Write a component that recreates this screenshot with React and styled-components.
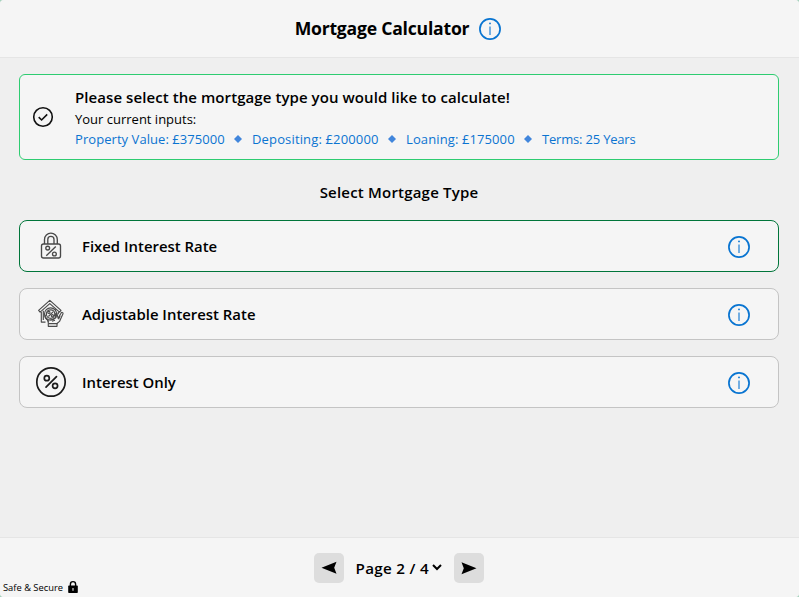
import React from "react";
import styled, { createGlobalStyle } from "styled-components";

const GlobalStyle = createGlobalStyle`
  *, *::before, *::after { box-sizing: border-box; }
  body {
    margin: 0;
    background: #a5d3bd;
    color: #000;
    font-family: "Open Sans", "Noto Sans", sans-serif;
  }
`;

const Shell = styled.div`
  display: grid;
  grid-template-rows: 58px 1fr 60px;
  height: 597px;
  overflow: hidden;
  border-radius: 4px;
  background: #efefef;
`;

const Header = styled.header`
  display: flex;
  align-items: center;
  justify-content: center;
  gap: 9px;
  padding: 1px 2px 0 0;
  background: #f5f5f5;
  border-bottom: 1px solid #e5e5e5;
`;

const Title = styled.h1`
  margin: 0 0 2px;
  font-size: 17.6px;
  line-height: 24px;
  font-weight: 700;
  letter-spacing: -0.22px;
  white-space: nowrap;
`;

const Main = styled.main`
  display: flex;
  flex-direction: column;
  padding: 16px 20px 0 19px;
`;

const Notice = styled.section`
  display: flex;
  align-items: center;
  gap: 21px;
  height: 86px;
  padding: 0 12px;
  background: #f5f5f5;
  border: 1px solid #2ecc71;
  border-radius: 6px;
`;

const NoticeBody = styled.div`
  display: flex;
  flex-direction: column;
`;

const NoticeTitle = styled.h2`
  margin: 0;
  font-size: 15px;
  line-height: 22px;
  font-weight: 600;
  letter-spacing: 0.075px;
  white-space: nowrap;
`;

const NoticeText = styled.p`
  margin: 0;
  padding-top: 1px;
  font-size: 13px;
  line-height: 20px;
  white-space: nowrap;
`;

const Summary = styled.ul`
  display: flex;
  align-items: center;
  margin: 0;
  padding: 0;
  list-style: none;
  font-size: 13px;
  line-height: 20px;
  color: #0b74d1;
  white-space: nowrap;
`;

const SummaryItem = styled.li`
  width: ${(p) => p.$width}px;
  letter-spacing: ${(p) => p.$tracking}px;
`;

const Divider = styled.li`
  display: flex;
  justify-content: center;
  width: 27px;
  padding-right: 1px;
`;

const SectionTitle = styled.h2`
  margin: 21px 0 17px;
  font-size: 15px;
  line-height: 22px;
  font-weight: 600;
  letter-spacing: 0.2px;
  text-align: center;
`;

const Options = styled.div`
  display: grid;
  gap: 16px;
`;

const Option = styled.div`
  display: grid;
  grid-template-columns: 32px 1fr 24px;
  align-items: center;
  column-gap: 15px;
  height: 52px;
  padding: 0 27px 0 15px;
  background: #f5f5f5;
  border: 1px solid ${(p) => (p.$selected ? "#00753a" : "#c4c4c4")};
  border-radius: 8px;
`;

const OptionLabel = styled.span`
  font-size: 14.9px;
  line-height: 22px;
  font-weight: 600;
`;

const OptionInfo = styled.span`
  padding-top: 2px;
`;

const Icon = styled.svg`
  display: block;
  flex: none;
  fill: none;
  overflow: visible;
`;

const Footer = styled.footer`
  display: grid;
  grid-template-columns: 1fr auto 1fr;
  padding-right: 2px;
  background: #f5f5f5;
  border-top: 1px solid #e5e5e5;
`;

const Secure = styled.div`
  display: flex;
  align-items: center;
  align-self: end;
  gap: 5px;
  padding: 0 0 3px 3px;
  font-size: 9.35px;
  line-height: 13px;
  white-space: nowrap;
`;

const Pager = styled.nav`
  display: flex;
  align-items: center;
  align-self: center;
  gap: 12px;
`;

const PageButton = styled.button`
  display: grid;
  place-items: center;
  width: 30px;
  height: 30px;
  padding: 0;
  border: 0;
  border-radius: 5px;
  background: #dddddd;
`;

const PageSelect = styled.div`
  display: flex;
  align-items: center;
  gap: 3px;
  width: 86px;
  font-size: 15.2px;
  line-height: 22px;
  font-weight: 600;
  letter-spacing: 0.3px;
  white-space: nowrap;
`;

const InfoIcon = () => (
  <Icon width="24" height="24" viewBox="0 0 24 24" stroke="#0874d1">
    <circle cx="12" cy="12" r="10.1" strokeWidth="1.7" />
    <path d="M12 9.5V18" strokeWidth="1.1" />
    <circle cx="12" cy="6.4" r="0.9" fill="#0874d1" stroke="none" />
  </Icon>
);

const CheckIcon = () => (
  <Icon width="22" height="22" viewBox="0 0 22 22" stroke="#111" strokeWidth="1.6">
    <circle cx="11" cy="11" r="9.3" />
    <path d="M6.7 11.2 9.6 14 15.2 8.4" />
  </Icon>
);

const Diamond = () => (
  <Icon width="8" height="8" viewBox="0 0 8 8">
    <path d="M4 0 8 4 4 8 0 4Z" fill="#4186dc" />
  </Icon>
);

const LockPercentIcon = () => (
  <Icon width="32" height="32" viewBox="0 0 32 32" stroke="#494949" strokeWidth="1.35">
    <rect x="6.5" y="14" width="19" height="14" rx="2" />
    <path d="M9.5 14V9.5a6.4 6.4 0 0 1 12.8 0V14M12.8 14V9.5a3.1 3.1 0 0 1 6.2 0V14" />
    <path d="M20.8 16.4 11.3 25.7" />
    <circle cx="12.7" cy="18.1" r="1.9" />
    <circle cx="19.4" cy="24" r="1.9" />
  </Icon>
);

const HouseHandIcon = () => (
  <Icon width="32" height="32" viewBox="0 0 32 32" stroke="#4b4b4b" strokeWidth="1.15" strokeLinejoin="round">
    <path d="M3.6 12.4 14.8 2.4 26 12.4 24.5 14.1 14.8 5.6 5.1 14.1Z" />
    <path d="M6.3 13.9V24.1H10.5M8.3 12.8V22M23.3 13.9V16.3M20.5 11.3V13.3" />
    <circle cx="15.6" cy="16" r="6.1" />
    <circle cx="15.6" cy="16" r="4.2" />
    <path d="M18 13.8 13.4 18.5" />
    <circle cx="13.9" cy="14.4" r="1.1" />
    <circle cx="17.4" cy="17.7" r="1.1" />
    <path d="M10.7 16.9C9.2 18.2 10.4 20.3 12.4 21.8L13.3 24.5V28.3H22V25.5L24.5 23.4 28 15.7C28.2 14.1 26.5 14.1 25.9 15.3L23.2 20.4 21.9 15.6C20.1 14.7 20.3 17.5 20.9 19.4L17.5 21.5 14.7 20.7" />
    <path d="M13.3 25.6H22.5M17 23.2 20 22.2M23.5 21.2 25.1 17.7M10.5 19.7 13.9 23.7" />
  </Icon>
);

const PercentIcon = () => (
  <Icon width="32" height="32" viewBox="0 0 32 32" stroke="#1b1b1b" strokeWidth="1.7">
    <circle cx="16" cy="16" r="14.2" />
    <path d="M21.5 10.6 11 21.1" strokeLinecap="round" />
    <circle cx="11.8" cy="12.2" r="2.5" />
    <circle cx="20.1" cy="19.8" r="2.5" />
  </Icon>
);

const ArrowIcon = ({ back }) => (
  <Icon width="16" height="14" viewBox="0 0 16 14">
    <path d={back ? "M0.5 6.7 15.5 0.7 13.2 6.7 15.5 12.7Z" : "M15.5 7.2 0.5 1.2 2.8 7.2 0.5 13.2Z"} fill="#000" />
  </Icon>
);

const ChevronIcon = () => (
  <Icon width="10" height="8" viewBox="0 0 10 8" stroke="#000" strokeWidth="2">
    <path d="M1 1 5 5 9 1" />
  </Icon>
);

const PadlockIcon = () => (
  <Icon width="10" height="13" viewBox="0 0 10 13">
    <path d="M2.4 6V3.2a2.6 2.6 0 0 1 5.2 0V6" stroke="#000" strokeWidth="1.4" />
    <rect x="0.2" y="4.6" width="9.6" height="7.4" rx="0.8" fill="#000" />
    <path d="M5 7.1V9.7" stroke="#eee" strokeWidth="1.1" />
  </Icon>
);

const summary = [
  { label: "Property Value: £375000", width: 150, tracking: 0.06 },
  { label: "Depositing: £200000", width: 127, tracking: 0.15 },
  { label: "Loaning: £175000", width: 109, tracking: 0.11 },
  { label: "Terms: 25 Years", width: 94, tracking: -0.19 },
];

const options = [
  { label: "Fixed Interest Rate", Glyph: LockPercentIcon, selected: true },
  { label: "Adjustable Interest Rate", Glyph: HouseHandIcon },
  { label: "Interest Only", Glyph: PercentIcon },
];

export default function App() {
  return (
    <>
      <GlobalStyle />
      <Shell>
        <Header>
          <Title>Mortgage Calculator</Title>
          <InfoIcon />
        </Header>
        <Main>
          <Notice>
            <CheckIcon />
            <NoticeBody>
              <NoticeTitle>Please select the mortgage type you would like to calculate!</NoticeTitle>
              <NoticeText>Your current inputs:</NoticeText>
              <Summary>
                {summary.map(({ label, width, tracking }, i) => (
                  <React.Fragment key={label}>
                    {i > 0 && <Divider><Diamond /></Divider>}
                    <SummaryItem $width={width} $tracking={tracking}>{label}</SummaryItem>
                  </React.Fragment>
                ))}
              </Summary>
            </NoticeBody>
          </Notice>
          <SectionTitle>Select Mortgage Type</SectionTitle>
          <Options>
            {options.map(({ label, Glyph, selected }) => (
              <Option key={label} $selected={selected}>
                <Glyph />
                <OptionLabel>{label}</OptionLabel>
                <OptionInfo><InfoIcon /></OptionInfo>
              </Option>
            ))}
          </Options>
        </Main>
        <Footer>
          <Secure>Safe &amp; Secure <PadlockIcon /></Secure>
          <Pager>
            <PageButton aria-label="Previous page"><ArrowIcon back /></PageButton>
            <PageSelect>Page 2 / 4 <ChevronIcon /></PageSelect>
            <PageButton aria-label="Next page"><ArrowIcon /></PageButton>
          </Pager>
        </Footer>
      </Shell>
    </>
  );
}
